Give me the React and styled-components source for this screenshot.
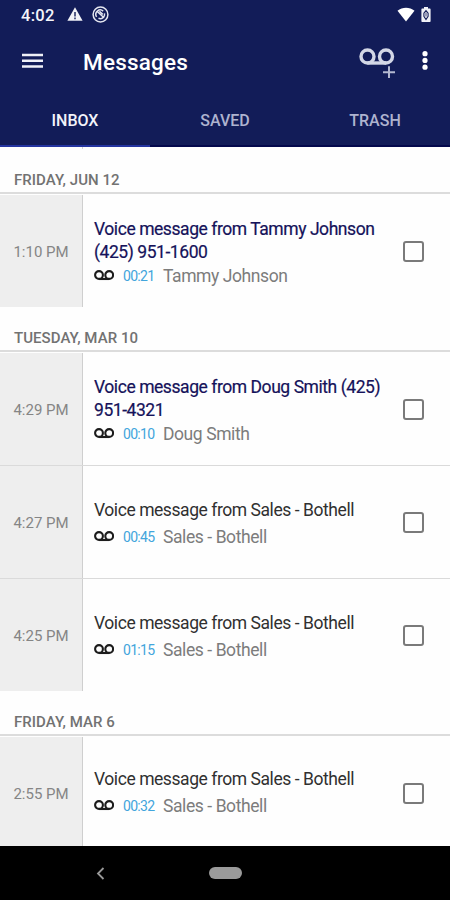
import React from 'react';
import styled, { createGlobalStyle } from 'styled-components';

const GlobalStyle = createGlobalStyle`
  * {
    box-sizing: border-box;
  }
  body {
    margin: 0;
    background: #fff;
    font-family: Roboto, sans-serif;
  }
`;

const Screen = styled.div`
  display: flex;
  flex-direction: column;
  width: 450px;
  height: 900px;
  overflow: hidden;
  background: #fefefe;
`;

const Header = styled.header`
  flex: none;
  height: 147px;
  background: #121c58;
  color: #fff;
`;

const StatusBar = styled.div`
  display: flex;
  align-items: center;
  height: 30px;
  padding: 0 19px 0 21px;
`;

const Clock = styled.span`
  width: 46px;
  font-size: 16.5px;
  font-weight: 500;
  letter-spacing: 0.3px;
  color: #f4f5fa;
`;

const StatusIcons = styled.div`
  display: flex;
  align-items: center;
  gap: ${props => props.$gap}px;
  margin-left: ${props => (props.$right ? 'auto' : 0)};
  margin-top: -2px;
`;

const Toolbar = styled.div`
  display: flex;
  align-items: center;
  height: 62px;
  padding: 0 22px;
`;

const IconButton = styled.button`
  display: flex;
  margin: 0;
  padding: 0;
  border: 0;
  background: none;
  color: inherit;
`;

const Title = styled.h1`
  flex: 1;
  margin: 1px 0 0 40px;
  font-size: 22.5px;
  font-weight: 500;
  letter-spacing: 0.2px;
`;

const Actions = styled.div`
  display: flex;
  align-items: center;
  gap: 27px;
`;

const Tabs = styled.nav`
  display: grid;
  grid-template-columns: repeat(3, 1fr);
  height: 55px;
`;

const Tab = styled.div`
  display: flex;
  align-items: center;
  justify-content: center;
  padding-top: 4px;
  border-bottom: 2px solid ${props => (props.$active ? '#2434a0' : '#04084c')};
  font-size: 16px;
  font-weight: 500;
  color: ${props => (props.$active ? '#f2f3fa' : '#aeb3cf')};
`;

const List = styled.main`
  flex: 1;
  min-height: 0;
  overflow: hidden;
`;

const ListEdge = styled.div`
  width: 83px;
  height: 2px;
  border-right: 1px solid #d4d4d4;
`;

const DayHeader = styled.h2`
  height: 45px;
  margin: 0 0 1px;
  padding: 9px 14px 0;
  border-bottom: 2px solid #dcdcdc;
  font-size: 15px;
  font-weight: 500;
  line-height: 44px;
  letter-spacing: 0.05px;
  color: #727272;
`;

const Row = styled.article`
  display: flex;
  height: 112px;

  & + & {
    height: 113px;
    border-top: 1px solid #dadada;
  }
`;

const Time = styled.div`
  display: flex;
  flex: none;
  align-items: center;
  justify-content: center;
  width: 83px;
  padding-top: 2px;
  border-right: 1px solid #cfcfcf;
  background: #eee;
  font-size: 15px;
  color: #858585;
`;

const Body = styled.div`
  display: flex;
  flex: 1;
  flex-direction: column;
  justify-content: center;
  padding: ${props => (props.$last ? '0 0 1px 11px' : '4px 0 0 11px')};
`;

const Subject = styled.div`
  margin-bottom: ${props => (props.$unread ? 0 : 3)}px;
  font-size: 17.5px;
  line-height: 23px;
  letter-spacing: -0.44px;
  color: ${props => (props.$unread ? '#15125a' : '#303030')};
  -webkit-text-stroke: ${props => (props.$unread ? '0.2px' : 0)};
`;

const Meta = styled.div`
  display: flex;
  align-items: center;
  height: 24px;
`;

const Duration = styled.span`
  width: 40px;
  margin-left: 9px;
  font-size: 14px;
  letter-spacing: -0.7px;
  color: #42a5dc;
`;

const Sender = styled.span`
  font-size: 17.5px;
  letter-spacing: -0.42px;
  color: #7c7c7c;
`;

const CheckCell = styled.div`
  display: flex;
  flex: none;
  align-items: center;
  width: 57px;
  padding-left: 10px;
`;

const Checkbox = styled.span`
  width: 21px;
  height: 21px;
  border: 2px solid #7a7a7a;
  border-radius: 3px;
`;

const NavBar = styled.footer`
  display: grid;
  grid-template-columns: 1fr 50px 1fr;
  align-items: center;
  justify-items: center;
  flex: none;
  height: 54px;
  background: #000;
`;

const HomePill = styled.span`
  width: 33px;
  height: 12px;
  border-radius: 6px;
  background: #9a9a9a;
`;

const WarningIcon = () => (
  <svg width="16" height="14" viewBox="0 0 16 14">
    <path d="M8 0.2 15.6 13.8H0.4Z" fill="#f0f1f7" />
    <path d="M8 5v4.4M8 10.6v1.6" stroke="#121c58" strokeWidth="1.4" />
  </svg>
);

const SyncIcon = () => (
  <svg width="17" height="17" viewBox="0 0 17 17" fill="none" stroke="#e4e6f0">
    <circle cx="8.5" cy="8.5" r="7.4" strokeWidth="1.5" />
    <path d="M4.6 10.8A4.4 4.4 0 0 1 11.2 5.1M12.5 7.3a4.4 4.4 0 0 1-6 5" strokeWidth="1.5" />
    <path d="M5 5.2l7 6.6M7.4 5.2l3.4 3.2" strokeWidth="1.5" />
  </svg>
);

const WifiIcon = () => (
  <svg width="18" height="15" viewBox="0 0 18 15">
    <path d="M0.5 3.8C5.3-.4 12.7-.4 17.5 3.8L9 14.6Z" fill="#fff" />
  </svg>
);

const BatteryIcon = () => (
  <svg width="10" height="15" viewBox="0 0 10 15">
    <path d="M3 0h4v1.5h1.6c.6 0 1 .4 1 1V14c0 .6-.4 1-1 1H1.4c-.6 0-1-.4-1-1V2.5c0-.6.4-1 1-1H3Z" fill="#f0f1f7" />
    <path d="M5 3.6 2.9 6.2V9.4L5 12.6 7.1 9.4V6.2Z" fill="none" stroke="#121c58" strokeWidth="1.1" />
    <path d="M5 5.5v4" stroke="#121c58" strokeWidth="0.8" />
  </svg>
);

const MenuIcon = () => (
  <svg width="21" height="16" viewBox="0 0 21 16">
    <path d="M0 2h21M0 7.7h21M0 13.4h21" stroke="#eff0f7" strokeWidth="2.5" />
  </svg>
);

const AddVoicemailIcon = () => (
  <svg width="37" height="34" viewBox="0 0 37 34" fill="none">
    <g stroke="#d3d7e6" strokeWidth="3.4">
      <circle cx="9.5" cy="12.5" r="6.5" />
      <circle cx="28" cy="12.5" r="6.5" />
      <path d="M9.5 19H28" />
    </g>
    <path d="M31 22.2v12M25 28.3h12" stroke="#b3b8d0" strokeWidth="2" />
  </svg>
);

const MoreIcon = () => (
  <svg width="6" height="20" viewBox="0 0 6 20" fill="#fff">
    <circle cx="3" cy="2.7" r="2.6" />
    <circle cx="3" cy="9.4" r="2.6" />
    <circle cx="3" cy="16.2" r="2.6" />
  </svg>
);

const VoicemailIcon = () => (
  <svg width="20" height="12" viewBox="0 0 20 12" fill="none" stroke="#1c1c1c" strokeWidth="2.1">
    <circle cx="5" cy="5" r="3.9" />
    <circle cx="15.2" cy="5" r="3.9" />
    <path d="M5 9H15.2" />
  </svg>
);

const BackIcon = () => (
  <svg width="9" height="13" viewBox="0 0 9 13">
    <path d="M7.5 1 2 6.5l5.500 5.500" fill="none" stroke="#999" strokeWidth="1.8" />
  </svg>
);

const days = [
  {
    label: 'FRIDAY, JUN 12',
    messages: [
      { time: '1:10 PM', subject: 'Voice message from Tammy Johnson (425) 951-1600', duration: '00:21', sender: 'Tammy Johnson', unread: true },
    ],
  },
  {
    label: 'TUESDAY, MAR 10',
    messages: [
      { time: '4:29 PM', subject: 'Voice message from Doug Smith (425) 951-4321', duration: '00:10', sender: 'Doug Smith', unread: true },
      { time: '4:27 PM', subject: 'Voice message from Sales - Bothell', duration: '00:45', sender: 'Sales - Bothell' },
      { time: '4:25 PM', subject: 'Voice message from Sales - Bothell', duration: '01:15', sender: 'Sales - Bothell' },
    ],
  },
  {
    label: 'FRIDAY, MAR 6',
    messages: [
      { time: '2:55 PM', subject: 'Voice message from Sales - Bothell', duration: '00:32', sender: 'Sales - Bothell', last: true },
    ],
  },
];

function Message(props) {
  const { time, subject, duration, sender, unread, last } = props;
  return (
    <Row>
      <Time>{time}</Time>
      <Body $last={last}>
        <Subject $unread={unread}>{subject}</Subject>
        <Meta>
          <VoicemailIcon />
          <Duration>{duration}</Duration>
          <Sender>{sender}</Sender>
        </Meta>
      </Body>
      <CheckCell>
        <Checkbox role="checkbox" aria-checked="false" />
      </CheckCell>
    </Row>
  );
}

function App() {
  return (
    <Screen>
      <GlobalStyle />
      <Header>
        <StatusBar>
          <Clock>4:02</Clock>
          <StatusIcons $gap={9}>
            <WarningIcon />
            <SyncIcon />
          </StatusIcons>
          <StatusIcons $gap={6} $right>
            <WifiIcon />
            <BatteryIcon />
          </StatusIcons>
        </StatusBar>
        <Toolbar>
          <IconButton aria-label="Menu"><MenuIcon /></IconButton>
          <Title>Messages</Title>
          <Actions>
            <IconButton aria-label="New voicemail"><AddVoicemailIcon /></IconButton>
            <IconButton aria-label="More"><MoreIcon /></IconButton>
          </Actions>
        </Toolbar>
        <Tabs>
          <Tab $active>INBOX</Tab>
          <Tab>SAVED</Tab>
          <Tab>TRASH</Tab>
        </Tabs>
      </Header>
      <List>
        <ListEdge />
        {days.map(day => (
          <section key={day.label}>
            <DayHeader>{day.label}</DayHeader>
            {day.messages.map(message => (
              <Message key={message.time} {...message} />
            ))}
          </section>
        ))}
      </List>
      <NavBar>
        <BackIcon />
        <HomePill />
      </NavBar>
    </Screen>
  );
}

export default App;
